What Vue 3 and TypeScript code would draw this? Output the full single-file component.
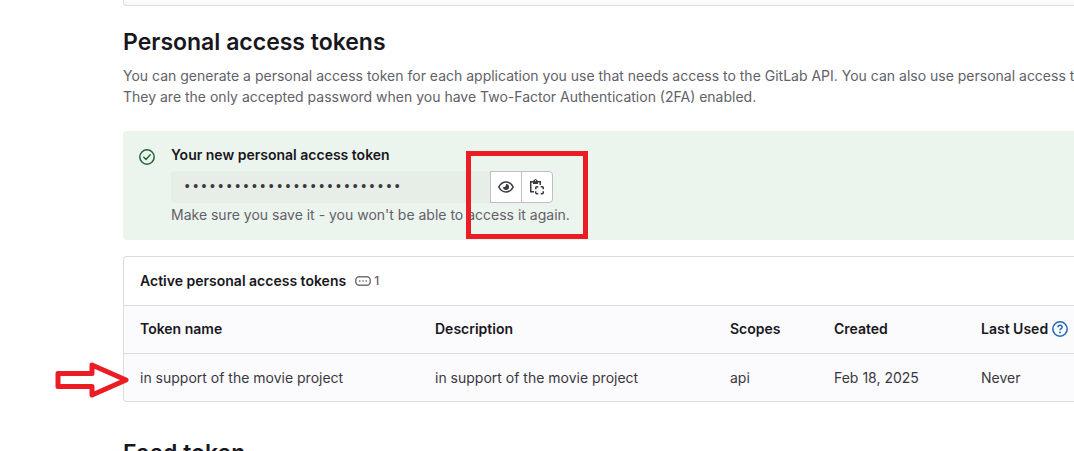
<script setup lang="ts">
import { ref } from 'vue'

interface Token {
  name: string
  description: string
  scopes: string
  created: string
  lastUsed: string
}

const revealed = ref(false)
const secret = ref('x'.repeat(26))
const tokens: Token[] = [
  {
    name: 'in support of the movie project',
    description: 'in support of the movie project',
    scopes: 'api',
    created: 'Feb 18, 2025',
    lastUsed: 'Never',
  },
]
</script>

<template>
  <main class="page">
    <div class="previous-card"></div>

    <section class="intro">
      <h1>Personal access tokens</h1>
      <p>
        You can generate a personal access token for each application you use that needs access to the GitLab API. You can also use personal access tokens<br />
        They are the only accepted password when you have Two-Factor Authentication (2FA) enabled.
      </p>
    </section>

    <section class="alert">
      <svg class="alert-icon" viewBox="0 0 16 16" fill="none" stroke="currentColor" stroke-width="1.5" aria-hidden="true">
        <circle cx="8" cy="8" r="7.2" />
        <path d="M4.8 8.3 7 10.4l4.2-4.6" stroke-linecap="round" stroke-linejoin="round" />
      </svg>
      <div class="alert-body">
        <label for="new-token">Your new personal access token</label>
        <div class="token-group">
          <input id="new-token" v-model="secret" :type="revealed ? 'text' : 'password'" readonly />
          <button type="button" aria-label="Click to reveal" @click="revealed = !revealed">
            <svg viewBox="0 0 16 16" aria-hidden="true">
              <path d="M.8 8C2.4 5 4.8 3 8 3S13.6 5 15.2 8C13.6 11 11.2 13 8 13S2.4 11 .8 8Z" fill="none" stroke="currentColor" stroke-width="1.5" stroke-linejoin="round" />
              <path d="M8 5a3 3 0 1 1-3 3c.5.3 1.1.3 1.5.1C7.7 7.7 8.3 6.2 8 5Z" fill="currentColor" />
            </svg>
          </button>
          <button class="last" type="button" aria-label="Copy personal access token">
            <svg viewBox="0 0 16 16" fill="none" stroke="currentColor" stroke-width="1.5" aria-hidden="true">
              <path d="M4.5 2.75H1.75V12.75H5M8.5 2.75h2.75V6" />
              <path d="M4 5V1.500H5a1.500 1.500 0 0 1 3 0H9V5ZM6.500 1a.6.6 0 1 0 0 1.200.6.6 0 0 0 0-1.200Z" fill="currentColor" fill-rule="evenodd" stroke="none" />
              <path d="M6.750 10.250V8.750Q6.750 7.750 7.750 7.750H9.250M11.750 7.750H13.250Q14.250 7.750 14.250 8.750V10.250M14.250 12.250V13.750Q14.250 14.750 13.250 14.750H11.750M9.250 14.750H7.750Q6.750 14.750 6.750 13.750V12.250" />
            </svg>
          </button>
        </div>
        <p>Make sure you save it - you won't be able to access it again.</p>
        <span class="highlight" aria-hidden="true"></span>
      </div>
    </section>

    <section class="card">
      <header>
        <h2>Active personal access tokens</h2>
        <svg class="count-icon" viewBox="0 0 16 16" aria-hidden="true">
          <rect x=".75" y="3.75" width="14.5" height="8.5" rx="3.5" fill="none" stroke="currentColor" stroke-width="1.5" />
          <path d="M4 7.3h1.5v1.5H4zM7.25 7.3h1.5v1.5h-1.5zM10.5 7.3H12v1.5h-1.5z" fill="currentColor" />
        </svg>
        <span class="count">{{ tokens.length }}</span>
      </header>
      <table>
        <colgroup>
          <col class="col-wide" />
          <col class="col-wide" />
          <col class="col-scopes" />
          <col class="col-created" />
          <col />
        </colgroup>
        <thead>
          <tr>
            <th scope="col">Token name</th>
            <th scope="col">Description</th>
            <th scope="col">Scopes</th>
            <th scope="col">Created</th>
            <th scope="col">
              <span class="with-help">
                Last Used
                <a href="#last-used" aria-label="Last used help">
                  <svg viewBox="0 0 16 16" fill="none" stroke="currentColor" stroke-width="1.5" aria-hidden="true">
                    <circle cx="8" cy="8" r="7.2" />
                    <path d="M5.9 6.3C5.9 5 6.8 4.3 8 4.3s2.1.8 2.1 1.9C10.1 7.7 8 7.6 8 9.3" />
                    <circle cx="8" cy="11.4" r=".95" fill="currentColor" stroke="none" />
                  </svg>
                </a>
              </span>
            </th>
          </tr>
        </thead>
        <tbody>
          <tr v-for="token in tokens" :key="token.name">
            <td>{{ token.name }}</td>
            <td>{{ token.description }}</td>
            <td>{{ token.scopes }}</td>
            <td>{{ token.created }}</td>
            <td>{{ token.lastUsed }}</td>
          </tr>
        </tbody>
      </table>
      <svg class="arrow" viewBox="0 0 76 38" aria-hidden="true">
        <path d="M4 12.5H38V4L72 19 38 34V25.5H4Z" fill="#fff" stroke="#eb1c24" stroke-width="5" stroke-linejoin="round" />
      </svg>
    </section>

    <h1 class="feed">Feed token</h1>
  </main>
</template>

<style>
html,
body {
  overflow: hidden;
  background: #fff;
}
</style>

<style scoped>
.page {
  padding-left: 123px;
  font-family: Inter, "Liberation Sans", sans-serif;
  font-size: 14px;
  line-height: 21px;
  color: #3a383f;
  white-space: nowrap;
}
h1,
h2,
p {
  margin: 0;
}
.previous-card {
  height: 5px;
  border: solid #dcdcde;
  border-width: 0 0 1px 1px;
  border-bottom-left-radius: 4px;
  background: #fbfafd;
}
h1 {
  font-size: 23px;
  line-height: 30px;
  font-weight: 600;
  color: #18171d;
}
.intro {
  padding-top: 21px;
  overflow: hidden;
}
.intro p {
  margin-top: 8px;
  color: #626168;
}
.alert {
  display: flex;
  gap: 16px;
  margin-top: 24px;
  padding: 13px 16px 15px;
  border-radius: 4px 0 0 4px;
  background: #ecf4ee;
}
.alert-icon {
  width: 16px;
  height: 16px;
  margin-top: 5px;
  color: #24663b;
}
.alert-body {
  position: relative;
}
.alert-body label {
  display: block;
  font-weight: 600;
  color: #18171d;
}
.alert-body p {
  color: #626168;
}
.token-group {
  display: flex;
  height: 32px;
  margin: 6px 0 1px;
}
.token-group input {
  box-sizing: border-box;
  width: 319px;
  padding: 0 12px;
  border: 0;
  border-radius: 4px 0 0 4px;
  background: #e7eee8;
  color: #3a383f;
  font: 14px "Liberation Mono", monospace;
  outline: 0;
}
.token-group button {
  display: flex;
  align-items: center;
  justify-content: center;
  box-sizing: border-box;
  width: 32px;
  padding: 0;
  border: 1px solid #bfbfc3;
  background: #fff;
  color: #3a383f;
}
.token-group .last {
  margin-left: -1px;
  border-radius: 0 4px 4px 0;
}
.token-group svg {
  width: 16px;
  height: 16px;
}
.highlight {
  position: absolute;
  top: 7px;
  left: 295px;
  box-sizing: border-box;
  width: 122px;
  height: 88px;
  border: 5px solid #eb1c24;
  pointer-events: none;
}
.card {
  position: relative;
  margin-top: 16px;
  border: solid #dcdcde;
  border-width: 1px 0 1px 1px;
  border-radius: 4px 0 0 4px;
}
.card header {
  display: flex;
  align-items: center;
  box-sizing: border-box;
  height: 48px;
  padding: 0 16px 1px;
}
h2 {
  font-size: 14px;
  line-height: 21px;
  font-weight: 600;
  color: #18171d;
}
.count-icon {
  width: 16px;
  height: 16px;
  margin: 0 3px 0 9px;
  color: #737278;
}
.count {
  font-size: 12px;
  font-weight: 500;
  color: #626168;
}
table {
  width: 100%;
  table-layout: fixed;
  border-collapse: separate;
  border-spacing: 0;
  border-bottom-left-radius: 3px;
  background: #fbfafd;
}
.col-wide {
  width: 295px;
}
.col-scopes {
  width: 104px;
}
.col-created {
  width: 147px;
}
th,
td {
  box-sizing: border-box;
  height: 48px;
  padding: 0 0 0 16px;
  border-top: 1px solid #dcdcde;
  text-align: left;
}
th {
  padding-bottom: 2px;
  font-weight: 600;
  color: #18171d;
}
.with-help {
  display: flex;
  align-items: center;
  gap: 4px;
}
.with-help a {
  display: flex;
  color: #1f68b5;
}
.with-help svg {
  width: 16px;
  height: 16px;
}
.arrow {
  position: absolute;
  left: -70px;
  bottom: 2px;
  width: 76px;
  height: 38px;
}
.feed {
  margin-top: 36px;
}
</style>
